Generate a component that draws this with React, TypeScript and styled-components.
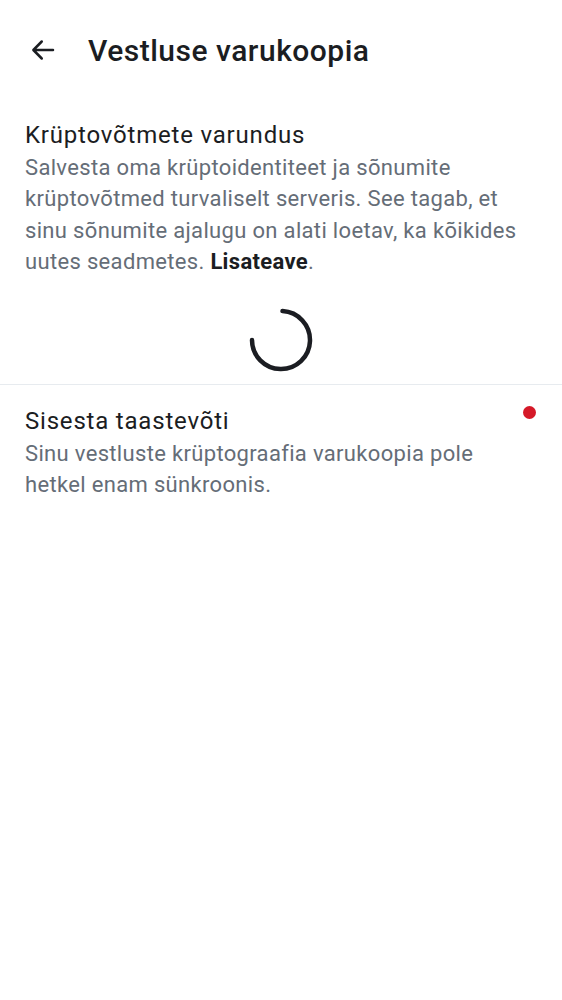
import React from "react";
import styled, { createGlobalStyle } from "styled-components";

const Global = createGlobalStyle`
  html, body { margin: 0; padding: 0; background: #ffffff; }
  body { font-family: Roboto, "Noto Sans", sans-serif; -webkit-font-smoothing: antialiased; }
`;

const Page = styled.div`
  width: 562px;
  min-height: 1000px;
  background: #ffffff;
  display: flex;
  flex-direction: column;
`;

const TopBar = styled.header`
  height: 100px;
  display: flex;
  align-items: center;
  padding: 0 0 0 18px;
  gap: 20px;
`;

const BackButton = styled.button`
  width: 50px;
  height: 50px;
  border: none;
  background: transparent;
  padding: 0;
  display: flex;
  align-items: center;
  justify-content: center;
  color: #1b1d22;
`;

const Title = styled.h1`
  margin: 0;
  font-size: 30px;
  font-weight: 500;
  color: #1b1d22;
  letter-spacing: 0.5px;
`;

const Section = styled.section<{ $pt: number }>`
  padding: ${(p) => p.$pt}px 25px 0 25px;
  position: relative;
`;

const ItemTitle = styled.div`
  font-size: 24px;
  line-height: 34px;
  color: #1b1d22;
  font-weight: 400;
  letter-spacing: 0.8px;
`;

const ItemText = styled.p`
  margin: 0;
  font-size: 22px;
  line-height: 31.3px;
  color: #656d77;
  font-weight: 400;
  letter-spacing: 0.33px;
`;

const Strong = styled.b`
  font-weight: 700;
  color: #1b1d22;
`;

const SpinnerRow = styled.div`
  display: flex;
  justify-content: center;
  padding: 30px 0 11px;
`;

const Divider = styled.hr`
  margin: 0;
  border: none;
  height: 1px;
  background: #e7ebef;
`;

const Dot = styled.span`
  position: absolute;
  top: 21px;
  right: 26px;
  width: 13px;
  height: 13px;
  border-radius: 50%;
  background: #d51928;
`;

const Spinner = () => (
  <svg width="66" height="66" viewBox="0 0 66 66">
    <path
      d="M 34.5 4.1 A 29 29 0 1 1 4 33"
      fill="none"
      stroke="#1b1d22"
      strokeWidth="4.5"
      strokeLinecap="round"
    />
  </svg>
);

export default function App() {
  return (
    <Page>
      <Global />
      <TopBar>
        <BackButton aria-label="Tagasi">
          <svg width="30" height="30" viewBox="0 0 24 24">
            <path
              d="M20 12H4.5M11 5.2L4.3 12L11 18.8"
              fill="none"
              stroke="currentColor"
              strokeWidth="2"
              strokeLinecap="round"
              strokeLinejoin="round"
            />
          </svg>
        </BackButton>
        <Title>Vestluse varukoopia</Title>
      </TopBar>
      <Section $pt={18}>
        <ItemTitle>Krüptovõtmete varundus</ItemTitle>
        <ItemText>
          Salvesta oma krüptoidentiteet ja sõnumite krüptovõtmed turvaliselt
          serveris. See tagab, et sinu sõnumite ajalugu on alati loetav, ka
          kõikides uutes seadmetes. <Strong>Lisateave</Strong>.
        </ItemText>
      </Section>
      <SpinnerRow>
        <Spinner />
      </SpinnerRow>
      <Divider />
      <Section $pt={19}>
        <ItemTitle>Sisesta taastevõti</ItemTitle>
        <ItemText>
          Sinu vestluste krüptograafia varukoopia pole hetkel enam sünkroonis.
        </ItemText>
        <Dot />
      </Section>
    </Page>
  );
}
